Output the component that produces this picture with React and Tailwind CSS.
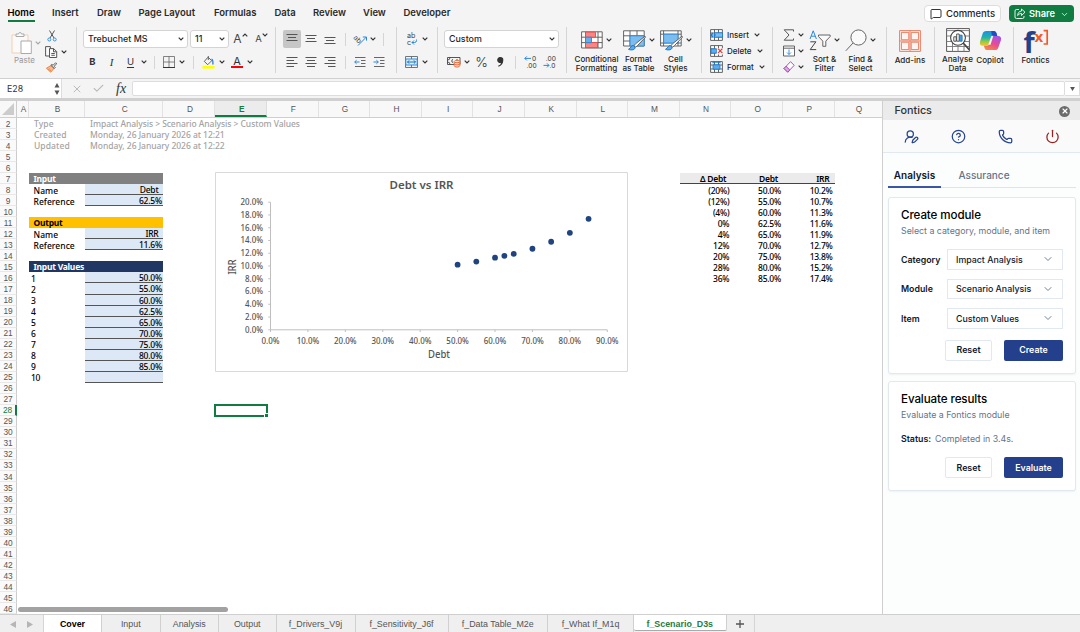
import {
  ChevronDown,
  CircleQuestionMark,
  MessageSquare,
  Phone,
  Power,
  UserRoundPen,
  X,
  Check,
} from 'lucide-react';

const MENU = [
  ['Home', 'w-[44.5px]'],
  ['Insert', 'w-[45px]'],
  ['Draw', 'w-[41.5px]'],
  ['Page Layout', 'w-[75.5px]'],
  ['Formulas', 'w-[60.5px]'],
  ['Data', 'w-[38.5px]'],
  ['Review', 'w-[50px]'],
  ['View', 'w-[40.5px]'],
  ['Developer', 'w-[60px]'],
];

const COLUMNS = 'ABCDEFGHIJKLMNOPQ'.split('');

const SHEETS = [
  ['Cover', 'w-[58px]'],
  ['Input', 'w-[58.5px]'],
  ['Analysis', 'w-[58.5px]'],
  ['Output', 'w-[57.5px]'],
  ['f_Drivers_V9j', 'w-[79px]'],
  ['f_Sensitivity_J6f', 'w-[93px]'],
  ['f_Data Table_M2e', 'w-[99.5px]'],
  ['f_What If_M1q', 'w-[86px]'],
  ['f_Scenario_D3s', 'w-[92.5px]'],
];

const RESULTS = [
  ['(20%)', 50, 10.2],
  ['(12%)', 55, 10.7],
  ['(4%)', 60, 11.3],
  ['0%', 62.5, 11.6],
  ['4%', 65, 11.9],
  ['12%', 70, 12.7],
  ['20%', 75, 13.8],
  ['28%', 80, 15.2],
  ['36%', 85, 17.4],
];

const pct = (n) => `${n.toFixed(1)}%`;

const Chev = ({ className = '' }) => (
  <svg viewBox="0 0 6 4" className={`h-[4px] w-[6px] shrink-0 ${className}`} fill="none" stroke="#333" strokeWidth="1.2">
    <path d="M.7.7 3 3 5.3.7" />
  </svg>
);

const Divider = ({ className = '' }) => <span className={`h-[13px] w-px shrink-0 bg-[#d5d5d5] ${className}`} />;

const Lines = ({ rows }) => (
  <svg viewBox="0 0 12 12" className="h-3 w-3 shrink-0" stroke="#555" strokeWidth="1">
    {rows.map(([x1, x2, y]) => (
      <path key={y} d={`M${x1} ${y}H${x2}`} />
    ))}
  </svg>
);

/* ---------- Ribbon icons ---------- */

const CopyIcon = () => (
  <svg viewBox="0 0 13 12" className="h-3 w-[13px]" fill="#fafafa" stroke="#444" strokeWidth=".9">
    <path d="M4 10H.6V.6h4.8v2" />
    <path d="M4.5 2.6h4.2l3 3v5.9H4.5zM8.5 2.8v3h3M6.3 7.5h3.5M6.3 9.3h3.5" />
  </svg>
);

const BrushIcon = () => (
  <svg viewBox="0 0 13 12" className="h-3 w-[13px]" fill="none" strokeWidth=".9">
    <path d="M6 3.8 1 6.8l4.7 4.3 3.6-4.2z" fill="#fbb98c" stroke="#e8762c" />
    <path d="m3 8.2 1.6-.8M4.4 9.6l1.6-1" stroke="#e8762c" />
    <path d="m5.8 3.6 3.8 3.5 1-1-1.3-1.4L12.2 2 11 .8 8.2 3.6 7 2.6z" fill="#eee" stroke="#444" />
  </svg>
);

const BordersIcon = () => (
  <svg viewBox="0 0 12 12" className="h-3 w-3" fill="none" stroke="#666" strokeWidth=".8">
    <path d="M.5.5h11v11H.5zM6 .5v11M.5 6h11" />
    <path d="M0 11.5h12" stroke="#222" />
  </svg>
);

const FillIcon = () => (
  <svg viewBox="0 0 13 13" className="h-[13px] w-[13px]" fill="none">
    <path d="M6 1.2 2.3 5.4l3.4 3.3 4-4L6.3 1.4M6.3 0v4" stroke="#555" strokeWidth=".9" />
    <path d="M9.5 3.2c1.5.3 1.6 2 1.4 5.3" stroke="#2b7cd3" strokeWidth="1.3" />
    <path d="M.5 10h12v2.6H.5z" fill="#ffff00" />
  </svg>
);

const OrientIcon = () => (
  <svg viewBox="0 0 13 12" className="h-3 w-[13px] overflow-visible" fill="none">
    <text x="-1" y="5" fontSize="7" fill="#444" transform="rotate(45 -1 5)" className="font-['Inter']">ab</text>
    <path d="M4 12.5 12.3 4.1M8.8 4h3.7v3.6" stroke="#2b88d8" />
  </svg>
);

const IndentIcon = ({ right }) => (
  <svg viewBox="0 0 12 12" className="h-3 w-3" fill="none" stroke="#666">
    <path d="M1 1.5h10.5M7 4.5h4.5M7 7.5h4.5M1 10.5h10.5" />
    <path d={right ? 'M.5 6h4.7M3.4 4.2 5.3 6 3.4 7.8' : 'M5.5 6H.8M2.6 4.2.7 6l1.9 1.8'} stroke="#2b88d8" />
  </svg>
);

const WrapIcon = () => (
  <svg viewBox="0 0 12 14" className="h-[14px] w-3 overflow-visible" fill="none">
    <text fontSize="7.2" fill="#444" className="font-['Inter']">
      <tspan x="1" y="6">ab</tspan>
      <tspan x="1" y="12.8">c</tspan>
    </text>
    <path d="M10.5 7.5v1q0 2-2 2H6M8 8.5l-2 2 2 2" stroke="#2b88d8" />
  </svg>
);

const MergeIcon = () => (
  <svg viewBox="0 0 13 12" className="h-3 w-[13px]" fill="none">
    <path d="M.5.5h12v11H.5zM6.5.5v11" stroke="#666" strokeWidth=".9" />
    <path d="M.8 3h11.4v6H.8z" fill="#dff0fd" stroke="#2b88d8" />
    <path d="M2.5 6h8M4.2 4.3 2.5 6l1.7 1.7M8.8 4.3 10.5 6 8.8 7.7" stroke="#1670c0" />
  </svg>
);

const CurrencyIcon = () => (
  <svg viewBox="0 0 14 12" className="h-3 w-[14px]" fill="none" strokeWidth=".9">
    <path d="M.5 1.5h12.5v7H.5zM3 1.5Q3 4 .6 4M3 8.5Q3 6 .6 6M6 3.3C4.4 3.6 4.4 6.4 6 6.7M10 3v1" stroke="#444" />
    <path d="M7.2 5.6v4.2c0 1.7 5.6 1.7 5.6 0V5.6M7.2 7.7c0 1.6 5.6 1.6 5.6 0" fill="#fde0d0" stroke="#e8602c" />
    <ellipse cx="10" cy="5.6" rx="2.8" ry="1.1" fill="#fff" stroke="#e8602c" />
  </svg>
);

const DecimalIcon = ({ less }) => (
  <svg viewBox="0 0 13 14" className="h-[14px] w-[13px] overflow-visible" fill="none">
    <text fontSize="6.6" fill="#333" className="font-['Inter']">
      <tspan x={less ? 2.8 : 8} y="5.8">{less ? '.00' : '0'}</tspan>
      <tspan x={less ? 6.6 : 2.6} y="12.8">{less ? '.0' : '.00'}</tspan>
    </text>
    <path d={less ? 'M.5 10.4H6M4 8.4l2 2-2 2' : 'M7 3.4H.8M2.8 1.4l-2 2 2 2'} stroke="#2b88d8" />
  </svg>
);

const CondIcon = () => (
  <svg viewBox="0 0 22 18" className="h-[18px] w-[22px]" fill="#fff" stroke="#555" strokeWidth=".9">
    <path d="M.6.8h20.6v16.2H.6zM4.5.8V17M17 .8V17M.6 6.2h20.6M.6 11.6h20.6" />
    <path d="M4.5 1.2h10v5h-10zM4.5 11.6h12v5h-12z" fill="#fb8583" stroke="#e8474c" />
    <path d="M4.5 6.2h6v5.4h-6z" fill="#64b0ea" stroke="#2b88d8" />
  </svg>
);

const TableIcon = ({ cell }) => (
  <svg viewBox="0 0 23 21" className="h-[21px] w-[23px]" fill="#fff" stroke="#555" strokeWidth=".9">
    <path d="M.6.8h20.6v15.2H.6z" />
    {cell ? <path d="M3.6.8V16M18 .8V16M.6 4.2h20.6M.6 13h20.6" /> : <path d="M7 .8V16M14 .8V16M.6 5.8h20.6M.6 11h20.6" />}
    <path d={cell ? 'M3.6 4.2H18V13H3.6z' : 'M7 5.8h14.2V16H7z'} fill="#7cbdf0" stroke="#2b88d8" />
    <path d="m22 6.2-9.5 7.6-1.5 1.7 1.7 1.6 1.8-1.5L22.6 7z" fill="#fff" />
    <path d="M10.2 15.5c-2 0-2.2 2.5-4.7 3.8 3 1.4 6.8.4 6.6-2z" fill="#5aaef0" stroke="#1c6fb8" />
  </svg>
);

const CellsIcon = ({ kind }) => (
  <svg viewBox="0 0 13 12" className="h-3 w-[13px]" fill="#fff" stroke="#555" strokeWidth=".9">
    <path d="M.6.6h11.8v10.8H.6zM4.5.6v10.8M8.5.6v10.8M.6 4h11.8M.6 8h11.8" />
    {kind === 'Insert' && (
      <g stroke="#1c7cd0">
        <path d="M4.5 3.8h8v4.4h-8z" fill="#7cbdf0" />
        <path d="M6 6H.8M3 3.8.8 6 3 8.2" fill="none" strokeWidth="1.2" />
      </g>
    )}
    {kind === 'Delete' && (
      <g>
        <path d="M1 3.8h4.5L7.5 6l-2 2.2H1z" fill="#5aaef0" stroke="#1c7cd0" />
        <path d="M7 3h6v6.5H7z" fill="#f4f4f4" stroke="none" />
        <path d="m8 3.6 4.4 4.6m0-4.6L8 8.2" stroke="#e03c3c" strokeWidth="1.2" />
      </g>
    )}
    {kind === 'Format' && (
      <g stroke="#1c7cd0">
        <path d="M3 3.8h7v4.4H3z" fill="#5aaef0" />
        <path d="M3 1.2h7M3 0v2.4M10 0v2.4" strokeWidth="1" />
      </g>
    )}
  </svg>
);

const SigmaIcon = () => (
  <svg viewBox="0 0 12 12" className="h-3 w-3" fill="none" stroke="#444" strokeWidth=".9">
    <path d="M10.5 2.5V.8H1.2L6 6l-4.8 5.2h9.3V9.5" />
  </svg>
);

const FillDownIcon = () => (
  <svg viewBox="0 0 12 12" className="h-3 w-3" fill="#fff" stroke="#555" strokeWidth=".9">
    <path d="M.5 1h11v10H.5zM.5 3.2h11" />
    <path d="M6 4.5v5M4 7.5l2 2 2-2" stroke="#2b88d8" fill="none" />
  </svg>
);

const EraserIcon = () => (
  <svg viewBox="0 0 12 12" className="h-3 w-3" fill="#fff" stroke="#9b45a8" strokeWidth=".9">
    <path d="m1 7.5 6.5-6.8 3.7 3.6-6.5 6.9z" />
    <path d="m1 7.5 2-2.2 3.8 3.6-2.1 2.3z" fill="#dfa8e6" />
  </svg>
);

const SortIcon = () => (
  <svg viewBox="0 0 22 21" className="h-[21px] w-[22px]" fill="none">
    <path d="M1 9 4.2.8 7.4 9M2.2 6.2h4" stroke="#2b88d8" />
    <path d="M1.3 11.8h5.6l-5.7 7.8h6" stroke="#444" />
    <path d="M9.5 5h11.6v1.6l-4.3 4.5v5.2h-3v-5.2L9.5 6.6z" stroke="#555" strokeWidth=".9" fill="#fafafa" />
  </svg>
);

const FindIcon = () => (
  <svg viewBox="0 0 22 23" className="h-[23px] w-[22px]" fill="#fafafa" stroke="#555" strokeWidth=".9">
    <circle cx="13.5" cy="8.5" r="7.6" />
    <path d="M8 14 .8 21.8" />
  </svg>
);

const AddinsIcon = () => (
  <svg viewBox="0 0 22 22" className="h-[22px] w-[22px]" fill="#fff4ef" stroke="#e57355" strokeWidth=".9">
    <path d="M.6.6h20.8v20.8H.6z" />
    <path d="M2.4 2.4h7.4v7.4H2.4zM12.2 2.4h7.4v7.4h-7.4zM2.4 12.2h7.4v7.4H2.4zM12.2 12.2h7.4v7.4h-7.4z" />
    <path d="M11 .6v20.8M.6 11h20.8" />
  </svg>
);

const AnalyseIcon = () => (
  <svg viewBox="0 0 24 24" className="h-6 w-6" fill="#fff" stroke="#444" strokeWidth=".9">
    <path d="M.6.6h22.8v22.8H.6z" />
    <path d="M.6 2.6h22.8M.6 8h22.8M.6 13.5h22.8M.6 18.5h22.8M6.5 13v10.4M12 18v5.4M18 16v7.4" stroke="#777" />
    <circle cx="12" cy="9.8" r="7.4" strokeWidth="1.1" />
    <path d="m17.2 15 6 6.6" strokeWidth="1.6" />
    <path d="M7.8 8.8h2.4v4.4H7.8zM10.7 6h2.5v7.2h-2.5z" />
    <path d="M13.6 7.2h2.5v6h-2.5z" fill="#4aa3ea" stroke="#1c6fb8" />
  </svg>
);

const CopilotIcon = () => (
  <svg viewBox="0 0 24 22" className="h-[21px] w-[23px]">
    <defs>
      <linearGradient id="cpL" x1="0" y1="0" x2="0" y2="1">
        <stop offset="0" stopColor="#1a8fe8" />
        <stop offset=".45" stopColor="#22b5a8" />
        <stop offset=".75" stopColor="#a5c93a" />
        <stop offset="1" stopColor="#f6c32c" />
      </linearGradient>
      <linearGradient id="cpR" x1=".7" y1="0" x2=".2" y2="1">
        <stop offset="0" stopColor="#a453e8" />
        <stop offset=".5" stopColor="#e74b93" />
        <stop offset="1" stopColor="#fb8a3c" />
      </linearGradient>
    </defs>
    <path d="M7.5 1h8c1.6 0 2.3 1 2.8 2.5l.8 2.7h-3c-1.6 0-2.5.8-3 2.4l-1.7 5.6c-.6 1.7-1.3 2.3-3 2.3H4c-2.6 0-3.7-1.7-2.9-4.5L3.7 4C4.3 2 5.5 1 7.5 1z" fill="url(#cpL)" />
    <path d="M16.5 21h-8c-1.6 0-2.3-1-2.8-2.5l-.6-2h2.8c1.6 0 2.5-.8 3-2.4l1.7-5.6c.6-1.7 1.3-2.3 3-2.3H20c2.6 0 3.7 1.7 2.9 4.5L20.3 18c-.6 2-1.8 3-3.8 3z" fill="url(#cpR)" />
    <path d="M12.8 1h2.7c1.6 0 2.3 1 2.8 2.5l.8 2.7h-3q-1.7 0-2.5 1.2z" fill="#1b4fc4" />
    <path d="M9.6 15.5 12.6 7q.4-.9 1.6-.9l.8 0-3 9.4z" fill="#f4f4f4" />
  </svg>
);

/* ---------- Ribbon ---------- */

const Select = ({ value, className }) => (
  <div className={`flex h-[18px] shrink-0 items-center justify-between rounded-[3px] border border-[#d4d4d4] bg-white pr-[3px] pl-1 text-[8.9px] font-medium ${className}`}>
    {value}
    <Chev />
  </div>
);

const BigButton = ({ icon, label, className, chev }) => (
  <div className={`flex shrink-0 flex-col items-center ${className}`}>
    <div className="flex h-[27px] items-center gap-[3px]">
      {icon}
      {chev && <Chev />}
    </div>
    <div className="pt-[2px] text-center text-[8.1px] leading-[9px] font-medium whitespace-pre">{label}</div>
  </div>
);

const Cell = ({ className = '', children }) => (
  <span className={`flex shrink-0 items-center justify-center ${className}`}>{children}</span>
);

const Group = ({ className, children }) => (
  <div className={`h-[46px] shrink-0 border-r border-[#d5d5d5] ${className}`}>{children}</div>
);

const MenuBar = () => (
  <div className="flex h-[26px] pl-[7.5px]">
    {MENU.map(([name, w], i) => (
      <div key={name} className={`shrink-0 ${w}`}>
        <div className={`h-[22px] w-fit pt-[5px] text-[9.5px] leading-[15px] font-semibold whitespace-nowrap ${i === 0 ? 'border-b-2 border-[#107c41] text-black' : 'text-[#2a2a2a]'}`}>
          {name}
        </div>
      </div>
    ))}
    <div className="ml-auto flex gap-[8px] pt-[5px] pr-[6px]">
      <div className="flex h-[17px] w-[77px] items-center justify-center gap-1 rounded-[4px] border border-[#ddd] bg-white pt-px text-[9.5px] font-medium">
        <MessageSquare size={12} strokeWidth={1.8} />
        Comments
      </div>
      <div className="flex h-[17px] w-[65px] items-center justify-center gap-[3px] rounded-[4px] bg-[#107c41] pt-px text-[9.3px] font-semibold text-white">
        <svg viewBox="0 0 12 12" className="h-3 w-3" fill="none" stroke="currentColor" strokeWidth=".9">
          <path d="M5 1.5H2.5Q1 1.5 1 3v6q0 1.5 1.5 1.5h6Q10 10.5 10 9V8" />
          <path d="M7.5 1v2C5 3.3 3.8 5 3.7 7.5 4.8 6 6 5.5 7.5 5.5v2L11 4.2z" />
        </svg>
        Share
        <ChevronDown size={9} className="ml-[2px]" />
      </div>
    </div>
  </div>
);

const Ribbon = () => (
  <div className="flex h-[53px] border-b border-[#d0d0d0] pt-px">
    <Group className="flex w-[77px] pl-[10px]">
      <div className="flex w-[33px] flex-col text-[#999]">
        <div className="flex h-[29px] items-center gap-[3px] pt-[2px]">
          <svg viewBox="0 0 22 24" className="h-6 w-[22px]" fill="#fafafa" strokeWidth="1">
            <path d="M2 4h16v18H2z" stroke="#f5cfae" />
            <path d="M6 5.5V3h2.5q1.5-3.5 3 0H14v2.5z" stroke="#aaa" />
            <path d="M11 10h10.3v12.5H11z" fill="#fff" stroke="#aaa" />
          </svg>
          <Chev className="opacity-40" />
        </div>
        <span className="pl-[4px] text-[8px] leading-[9px]">Paste</span>
      </div>
      <div className="flex flex-col gap-[4px] pt-[3px] pl-[2px]">
        <Cell className="h-3 w-[13px]">
          <svg viewBox="0 0 10 12" className="h-3 w-[10px]" fill="none" strokeWidth=".9">
            <path d="M2.5.5 7 8M7.5.5 3 8" stroke="#444" />
            <circle cx="2.3" cy="9.5" r="1.5" stroke="#2b88d8" />
            <circle cx="7.7" cy="9.5" r="1.5" stroke="#2b88d8" />
          </svg>
        </Cell>
        <span className="flex items-center gap-[3px]"><CopyIcon /><Chev /></span>
        <BrushIcon />
      </div>
    </Group>

    <Group className="w-[199px] pl-[6px]">
      <div className="flex h-[24px] items-center gap-[2px]">
        <Select value="Trebuchet MS" className="w-[105px]" />
        <Select value="11" className="w-[39px]" />
        <Cell className="w-[19px] text-[12px] text-[#444]">A<Chev className="mb-2 rotate-180" /></Cell>
        <Cell className="w-[19px] text-[9.5px] text-[#444]">A<Chev className="mb-2" /></Cell>
      </div>
      <div className="flex h-[22px] items-center text-[9.5px] text-[#333]">
        <Cell className="w-[19px] font-bold">B</Cell>
        <Cell className="w-[19px] font-['Liberation_Serif'] text-[11px] italic">I</Cell>
        <Cell className="w-[19px] underline underline-offset-2">U</Cell>
        <Cell className="w-[8px]"><Chev /></Cell>
        <Divider className="ml-[6px]" />
        <Cell className="ml-[7px] w-[14px]"><BordersIcon /></Cell>
        <Chev className="ml-[3px]" />
        <Divider className="ml-[8px]" />
        <Cell className="ml-[8px]"><FillIcon /></Cell>
        <Chev className="ml-[4px]" />
        <Cell className="ml-[6px] h-[13px] w-3 flex-col text-[11px] leading-[10px]">
          <span>A</span>
          <i className="h-[2.5px] w-3 shrink-0 bg-[#ff0000]" />
        </Cell>
        <Chev className="ml-[4px]" />
      </div>
    </Group>

    <Group className="w-[121px] pl-[6.5px]">
      <div className="flex h-[24px] items-center">
        <Cell className="h-[18px] w-[18px] rounded-[2px] bg-[#c6c6c6]"><Lines rows={[[.5, 11.5, 1.5], [2, 10, 4.5], [.5, 11.5, 7.5]]} /></Cell>
        <Cell className="ml-px w-[19px]"><Lines rows={[[.5, 11.5, 2.5], [2, 10, 5.5], [.5, 11.5, 8.5]]} /></Cell>
        <Cell className="w-[19px]"><Lines rows={[[.5, 11.5, 4.5], [2, 10, 7.5], [.5, 11.5, 10.5]]} /></Cell>
        <Divider className="ml-[5px]" />
        <Cell className="ml-[8px]"><OrientIcon /></Cell>
        <Chev className="ml-[3px]" />
        <Divider className="ml-[7px]" />
      </div>
      <div className="flex h-[22px] items-center">
        <Cell className="w-[18px]"><Lines rows={[[.5, 11.5, 1.5], [.5, 8, 4.5], [.5, 11.5, 7.5], [.5, 8, 10.5]]} /></Cell>
        <Cell className="ml-px w-[19px]"><Lines rows={[[.5, 11.5, 1.5], [2, 10, 4.5], [.5, 11.5, 7.5], [2, 10, 10.5]]} /></Cell>
        <Cell className="w-[19px]"><Lines rows={[[.5, 11.5, 1.5], [4, 11.5, 4.5], [.5, 11.5, 7.5], [4, 11.5, 10.5]]} /></Cell>
        <Divider className="ml-[5px]" />
        <Cell className="ml-[5px] w-[18px]"><IndentIcon /></Cell>
        <Cell className="w-[20px]"><IndentIcon right /></Cell>
      </div>
    </Group>

    <Group className="w-[41px] pl-[8px]">
      <div className="flex h-[24px] items-center gap-[4px]"><Cell className="w-[13px]"><WrapIcon /></Cell><Chev /></div>
      <div className="flex h-[22px] items-center gap-[4px]"><MergeIcon /><Chev /></div>
    </Group>

    <Group className="w-[129px] pl-[6px]">
      <div className="flex h-[24px] items-center"><Select value="Custom" className="w-[115px]" /></div>
      <div className="flex h-[22px] items-center text-[#333]">
        <Cell className="ml-[3px]"><CurrencyIcon /></Cell>
        <Chev className="ml-[3px]" />
        <Cell className="ml-[4px] w-[15px] text-[13.5px] font-light">%</Cell>
        <Cell className="ml-[5px] h-[13px] w-[13px]">
          <svg viewBox="0 0 7 10" className="h-[10px] w-[7px]" fill="#333"><path d="M3.3 0a3 3 0 0 1 3 3.3c0 3.2-1.8 5.500-4.800 6.400l-.4-.9c1.700-.7 2.600-1.600 2.800-2.900A3 3 0 1 1 3.300 0z" /></svg>
        </Cell>
        <Divider className="ml-[8px]" />
        <Cell className="ml-[8px]"><DecimalIcon /></Cell>
        <Cell className="ml-[6px]"><DecimalIcon less /></Cell>
      </div>
    </Group>

    <Group className="flex w-[135px] pl-[6px]">
      <BigButton className="w-[47px]" chev icon={<CondIcon />} label={'Conditional\nFormatting'} />
      <BigButton className="w-[37px]" chev icon={<TableIcon />} label={'Format\nas Table'} />
      <BigButton className="w-[37px]" chev icon={<TableIcon cell />} label={'Cell\nStyles'} />
    </Group>

    <Group className="flex w-[71px] flex-col pl-[8px]">
      {['Insert', 'Delete', 'Format'].map((k) => (
        <div key={k} className="flex h-[16.2px] shrink-0 items-center gap-[4px] text-[8px] font-medium">
          <CellsIcon kind={k} />
          {k}
          <Chev className="ml-px" />
        </div>
      ))}
    </Group>

    <Group className="flex w-[114px] pl-[9.5px]">
      <div className="flex w-[26px] flex-col">
        {[<SigmaIcon key="s" />, <FillDownIcon key="f" />, <EraserIcon key="e" />].map((icon, i) => (
          <div key={i} className="flex h-[16.2px] shrink-0 items-center gap-[3.5px]">{icon}<Chev /></div>
        ))}
      </div>
      <BigButton className="w-[32px]" chev icon={<SortIcon />} label={'Sort &\nFilter'} />
      <BigButton className="w-[40px]" chev icon={<FindIcon />} label={'Find &\nSelect'} />
    </Group>

    <Group className="flex w-[48px]">
      <BigButton className="w-[46px]" icon={<AddinsIcon />} label="Add-ins" />
    </Group>

    <Group className="flex w-[79px] pl-[6px]">
      <BigButton className="w-[33px]" icon={<AnalyseIcon />} label={'Analyse\nData'} />
      <BigButton className="w-[32px]" icon={<CopilotIcon />} label="Copilot" />
    </Group>

    <BigButton
      className="w-[43px]"
      label="Fontics"
      icon={
        <svg viewBox="0 0 24 26" className="h-[26px] w-6 overflow-visible">
          <text x="-.5" y="24.5" fontSize="29" fontWeight="700" fill="#27408b" className="font-['Open_Sans']">f</text>
          <text x="10.5" y="14" fontSize="15" fontWeight="700" fill="#f15a24" className="font-['Open_Sans']">x</text>
          <path d="M19.6 2.6h3.6v13.4h-3.6" fill="none" stroke="#f15a24" strokeWidth="1.7" />
        </svg>
      }
    />
  </div>
);

const FormulaBar = () => (
  <div className="flex h-[22px] items-center border-b-[3px] border-[#d0d0d0] text-[#333]">
    <div className="flex h-full w-[62px] items-center justify-between border-r border-[#ddd] bg-white pr-px pl-[7px] text-[8.8px]">
      E28
      <svg viewBox="0 0 6 12" className="h-3 w-[6px]" fill="#555"><path d="M3 0 5.5 4.5H.5zM3 12 .5 7.5h5z" /></svg>
    </div>
    <X size={12} className="ml-[9px] text-[#bbb]" />
    <Check size={13} className="ml-[9px] text-[#bbb]" />
    <span className="ml-[11px] font-['Liberation_Serif'] text-[14px] leading-none italic">fx</span>
    <div className="ml-[6px] h-[15px] flex-1 rounded-[2px] border border-[#ddd] bg-white" />
    <div className="flex h-[15px] w-[15px] items-center justify-center border border-l-0 border-[#ddd] bg-white">
      <svg viewBox="0 0 6 5" className="h-[4px] w-[5px]" fill="#555"><path d="M0 0h6L3 5z" /></svg>
    </div>
  </div>
);

/* ---------- Worksheet ---------- */

const GRID = 'grid grid-cols-[17px_12px_56px_78.4px_52px_repeat(12,51.6px)_48px]';

// Places a value on the sheet by its column letter and row number
const At = ({ col, row, span = 1, className = '', children }) => (
  <div
    className={`flex items-center whitespace-nowrap ${className}`}
    style={{ gridColumn: `${COLUMNS.indexOf(col) + 2} / span ${span}`, gridRow: row - 1 }}
  >
    {children}
  </div>
);

const labelCell = 'pl-[4.5px] pt-px tracking-[0.05px]';
const inputCell = 'justify-end border-b border-[#555] bg-[#dce8f6] pt-px';

const Chart = () => {
  const px = (v) => 55.5 + v * 3.742;
  const py = (v) => 157.8 - v * 6.38;
  return (
    <svg viewBox="0 0 413 200" className="h-[200px] w-[413px] font-['Noto_Sans'] text-[8.5px] font-medium" fill="#555">
      <path d="M.5.5h412v199H.5z" fill="#fff" stroke="#d9d9d9" />
      <text x="206.5" y="17" textAnchor="middle" fontSize="11.5" fontWeight="600" textLength="64" lengthAdjust="spacingAndGlyphs">Debt vs IRR</text>
      <path d={`M55.5 30.2V157.8H${px(90)}`} fill="none" stroke="#bfbfbf" />
      {Array.from({ length: 11 }, (_, i) => (
        <g key={i}>
          <path d={`M53.3 ${py(i * 2)}h2.2`} stroke="#bfbfbf" />
          <text x="48" y={py(i * 2) + 2.8} textAnchor="end" textLength={i < 5 ? 18 : 22.5} lengthAdjust="spacingAndGlyphs">{pct(i * 2)}</text>
        </g>
      ))}
      {Array.from({ length: 10 }, (_, i) => (
        <g key={i}>
          <path d={`M${px(i * 10)} 157.8v2.2`} stroke="#bfbfbf" />
          <text x={px(i * 10)} y="172.3" textAnchor="middle" textLength={i ? 22.5 : 18} lengthAdjust="spacingAndGlyphs">{pct(i * 10)}</text>
        </g>
      ))}
      <text x="224" y="186" textAnchor="middle" fontSize="10" textLength="22" lengthAdjust="spacingAndGlyphs">Debt</text>
      <text transform="translate(20.5 95) rotate(-90)" textAnchor="middle" fontSize="10" textLength="15" lengthAdjust="spacingAndGlyphs">IRR</text>
      {RESULTS.map(([k, debt, irr]) => (
        <circle key={k} cx={px(debt)} cy={py(irr)} r="2.9" fill="#1f4480" />
      ))}
    </svg>
  );
};

const Worksheet = () => (
  <div className="relative flex w-[882px] shrink-0 flex-col overflow-hidden bg-white">
    <div className={`${GRID} h-[17px] shrink-0 border-b border-[#cfcfcf] bg-[#f8f8f8] font-['Liberation_Sans'] text-[8.3px] text-[#555]`}>
      <div className="flex items-end justify-end border-r border-[#ccc] p-[2px]">
        <svg viewBox="0 0 12 12" className="h-3 w-3" fill="#ccc"><path d="M12 0v12H0z" /></svg>
      </div>
      {COLUMNS.map((c) => (
        <div
          key={c}
          className={`flex items-center justify-center border-r pl-[2px] ${c === 'E' ? 'border-b-2 border-r-[#ddd] border-b-[#107c41] bg-[#ececec] pt-[2px] font-bold text-[#107c41]' : 'border-[#e2e2e2]'}`}
        >
          {c}
        </div>
      ))}
    </div>

    <div className={`${GRID} flex-1 grid-rows-[repeat(45,11.045px)] font-['Noto_Sans'] text-[8.5px] leading-[11px] font-medium tracking-[-0.25px] text-black`}>
      {Array.from({ length: 45 }, (_, i) => (
        <div
          key={i}
          className={`col-start-1 flex items-center justify-center border-b border-b-[#e8e8e8] bg-[#fafafa] pt-[2px] font-['Liberation_Sans'] text-[8.3px] font-normal tracking-normal ${i === 26 ? 'border-r-2 border-r-[#107c41] bg-[#ececec] text-[#107c41]' : 'border-r border-r-[#ccc] text-[#555]'}`}
          style={{ gridRow: i + 1 }}
        >
          {i + 2}
        </div>
      ))}

      {[
        ['Type', 'Impact Analysis > Scenario Analysis > Custom Values'],
        ['Created', 'Monday, 26 January 2026 at 12:21'],
        ['Updated', 'Monday, 26 January 2026 at 12:22'],
      ].map(([k, v], i) => (
        <div key={k} className="contents text-[#a3a3a3]">
          <At col="B" row={i + 2} className="pl-[5px] tracking-[0.1px]">{k}</At>
          <At col="C" row={i + 2} span={5} className={`pl-[5px] ${i ? 'tracking-[-0.04px]' : 'tracking-[-0.06px]'}`}>{v}</At>
        </div>
      ))}

      <At col="B" row={7} span={2} className="bg-[#808080] pl-[4.5px] font-bold text-white">Input</At>
      <At col="B" row={8} className={labelCell}>Name</At>
      <At col="C" row={8} className={`${inputCell} pr-[5px]`}>Debt</At>
      <At col="B" row={9} className={labelCell}>Reference</At>
      <At col="C" row={9} className={`${inputCell} pr-[1.5px]`}>62.5%</At>

      <At col="B" row={11} span={2} className="bg-[#ffc000] pl-[4.5px] font-bold">Output</At>
      <At col="B" row={12} className={labelCell}>Name</At>
      <At col="C" row={12} className={`${inputCell} pr-[5px]`}>IRR</At>
      <At col="B" row={13} className={labelCell}>Reference</At>
      <At col="C" row={13} className={`${inputCell} pr-[1.5px]`}>11.6%</At>

      <At col="B" row={15} span={2} className="bg-[#203764] pl-[4.5px] font-bold text-white">Input Values</At>
      {Array.from({ length: 10 }, (_, i) => (
        <div key={i} className="contents">
          <At col="B" row={16 + i} className="pt-px pl-[2px]">{i + 1}</At>
          <At col="C" row={16 + i} className={`${inputCell} pr-[1.5px]`}>{RESULTS[i] && pct(RESULTS[i][1])}</At>
        </div>
      ))}

      {[['N', 'Δ Debt'], ['O', 'Debt'], ['P', 'IRR']].map(([col, name]) => (
        <At key={col} col={col} row={7} className="justify-end border-b border-[#444] bg-[#ebebeb] pt-px pr-[5px] font-semibold">{name}</At>
      ))}
      {RESULTS.map(([delta, debt, irr], i) => (
        <div key={delta} className="contents">
          <At col="N" row={8 + i} className="justify-end pt-px pr-[2px]">{delta}</At>
          <At col="O" row={8 + i} className="justify-end pt-px pr-[2px]">{pct(debt)}</At>
          <At col="P" row={8 + i} className="justify-end pt-px pr-[2px]">{pct(irr)}</At>
        </div>
      ))}

      <At col="E" row={28} className="relative -mx-px -my-px border-2 border-[#107c41]">
        <i className="absolute -right-[3px] -bottom-[3px] h-[5px] w-[5px] border border-white bg-[#107c41]" />
      </At>
    </div>

    <div className="absolute top-[71px] left-[215px]"><Chart /></div>
    <div className="absolute bottom-[2px] left-[18px] h-[5px] w-[210px] rounded-full bg-[#a2a2a2]" />
  </div>
);

const SheetTabs = () => (
  <div className="flex h-[18px] shrink-0 border-t border-[#cfcfcf] bg-[#efefef] font-['Liberation_Sans'] text-[8.9px] text-[#555]">
    <div className="flex w-[44px] items-center justify-center gap-[11px] border-r border-[#d5d5d5] pt-px">
      <svg viewBox="0 0 6 7" className="h-[7px] w-[6px]" fill="#b5b5b5"><path d="M6 0v7L0 3.5z" /></svg>
      <svg viewBox="0 0 6 7" className="h-[7px] w-[6px]" fill="#b5b5b5"><path d="M0 0v7l6-3.5z" /></svg>
    </div>
    {SHEETS.map(([name, w], i) => {
      const tone = i === 0
        ? 'bg-white pt-[1.5px] font-bold text-black'
        : i === 8
          ? 'mb-px rounded-b-[2px] border-b border-b-[#aaa] bg-white pt-[4px] text-[8.9px] font-bold text-[#1e7d49]'
          : 'pt-[1.5px]';
      return (
        <div key={name} className={`flex shrink-0 items-center justify-center border-r border-r-[#d0d0d0] ${w} ${tone}`}>
          {name}
        </div>
      );
    })}
    <div className="flex w-[28px] items-center justify-center border-r border-[#d5d5d5]">
      <svg viewBox="0 0 8 8" className="h-2 w-2" stroke="#555" strokeWidth="1.3"><path d="M4 0v8M0 4h8" /></svg>
    </div>
  </div>
);

/* ---------- Task pane ---------- */

const Field = ({ label, value }) => (
  <div className="flex h-[20.5px] items-center justify-between">
    <span className="text-[8.8px] font-semibold">{label}</span>
    <div className="flex h-full w-[116px] items-center justify-between border border-[#e2e8f0] bg-white pr-[8.5px] pl-[8px] text-[8.8px] font-medium">
      {value}
      <ChevronDown size={12} strokeWidth={1.8} className="text-[#64748b]" />
    </div>
  </div>
);

const Actions = ({ primary }) => (
  <div className="flex justify-end gap-[12px] text-[8.8px] font-semibold">
    <button className="h-[21px] w-[47px] rounded-[2px] border border-[#e2e8f0] bg-white">Reset</button>
    <button className="h-[21px] w-[59px] rounded-[2px] bg-[#243f8c] text-white">{primary}</button>
  </div>
);

const Card = ({ title, subtitle, className, children }) => (
  <div className={`mr-[4px] ml-[5px] rounded-[3px] border border-[#e2e8f0] bg-white px-[12px] shadow-xs ${className}`}>
    <h2 className="pt-[9px] text-[11.6px] leading-[16px] font-medium tracking-[-0.1px] text-black">{title}</h2>
    <p className="text-[8.8px] leading-[15px] text-[#64748b]">{subtitle}</p>
    {children}
  </div>
);

const TaskPane = () => (
  <div className="flex flex-1 flex-col border-l border-[#cfcfcf] bg-[#fcfdfd] text-[#0f172a]">
    <div className="flex h-[19px] items-center justify-between bg-[#ebebeb] pt-px pr-[10px] pl-[11.5px] text-[10.8px] font-medium text-[#333]">
      Fontics
      <span className="flex h-[11px] w-[11px] items-center justify-center rounded-full bg-[#6b6b6b] text-white"><X size={8} strokeWidth={3.5} /></span>
    </div>
    <div className="flex h-[33px] items-center justify-between border-b border-[#e2e8f0] bg-[#fafafa] pr-[20px] pl-[21px] text-[#27448f]">
      <UserRoundPen size={15} strokeWidth={2} />
      <CircleQuestionMark size={15} strokeWidth={2} />
      <Phone size={15} strokeWidth={2} />
      <Power size={15} strokeWidth={2} className="text-[#9c1f1f]" />
    </div>
    <div className="mt-[8px] mr-[4px] ml-[5px] flex h-[27px] border-b border-[#dde4ef] text-[10px] leading-[28px]">
      <span className="-mb-px h-[27px] w-[53px] border-b-2 border-[#3b55a5] text-center font-semibold">Analysis</span>
      <span className="ml-[17.5px] font-medium text-[#64748b]">Assurance</span>
    </div>

    <Card title="Create module" subtitle="Select a category, module, and item" className="mt-[9px] h-[177px]">
      <div className="flex flex-col gap-[9px] pt-[11px] pb-[11px]">
        <Field label="Category" value="Impact Analysis" />
        <Field label="Module" value="Scenario Analysis" />
        <Field label="Item" value="Custom Values" />
      </div>
      <Actions primary="Create" />
    </Card>

    <Card title="Evaluate results" subtitle="Evaluate a Fontics module" className="mt-[7px] h-[110px]">
      <p className="pt-[9px] pb-[11px] text-[8.8px] leading-[15px] text-[#64748b]">
        <b className="mr-[4px] font-semibold text-[#0f172a]">Status:</b>
        Completed in 3.4s.
      </p>
      <Actions primary="Evaluate" />
    </Card>
  </div>
);

export default function App() {
  return (
    <div className="flex h-[632px] w-[1080px] flex-col overflow-hidden bg-[#f4f4f4] font-['Inter',sans-serif] text-[#1f1f1f]">
      <MenuBar />
      <Ribbon />
      <FormulaBar />
      <div className="flex min-h-0 flex-1">
        <Worksheet />
        <TaskPane />
      </div>
      <SheetTabs />
    </div>
  );
}
